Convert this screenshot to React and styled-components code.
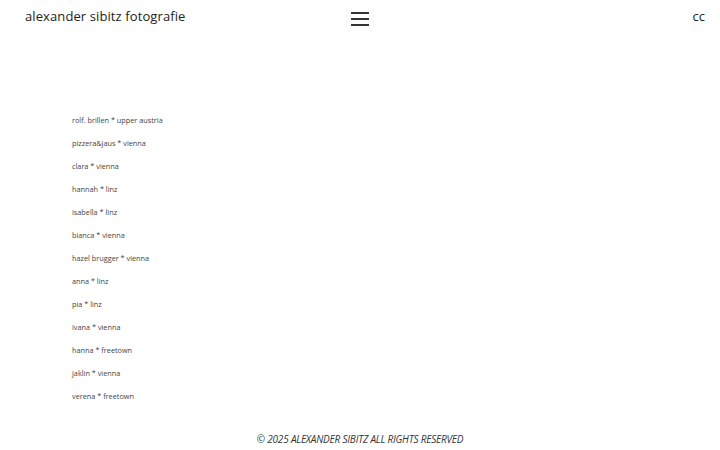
import React from "react";
import styled, { createGlobalStyle } from "styled-components";

const Global = createGlobalStyle`
  html, body { margin: 0; padding: 0; background: #fff; }
  body { font-family: "Open Sans", "DejaVu Sans", sans-serif; color: #222; }
`;

const Page = styled.div`
  width: 720px;
  height: 450px;
  display: flex;
  flex-direction: column;
  overflow: hidden;
`;

const Header = styled.header`
  height: 40px;
  display: grid;
  grid-template-columns: 1fr auto 1fr;
  align-items: start;
  padding: 0 15px;
`;

const Brand = styled.div`
  font-size: 13px;
  color: #222;
  padding: 7px 0 0 10px;
  letter-spacing: 0.1px;
`;

const Burger = styled.button`
  border: 0;
  background: none;
  padding: 0;
  margin-top: 12px;
  width: 18px;
  display: flex;
  flex-direction: column;
  gap: 4px;
  cursor: pointer;
`;

const Line = styled.span`
  display: block;
  height: 2px;
  background: #333;
`;

const Lang = styled.div`
  justify-self: end;
  font-size: 13px;
  padding-top: 7px;
  color: #222;
`;

const List = styled.ul`
  list-style: none;
  margin: 0;
  padding: 73px 0 0 72px;
  display: flex;
  flex-direction: column;
  gap: 9px;
  flex: 1;
`;

const Item = styled.li`
  font-size: 7.3px;
  line-height: 14px;
  color: #444;
`;

const Footer = styled.footer`
  text-align: center;
  font-size: 10px;
  font-style: italic;
  text-transform: uppercase;
  letter-spacing: -0.2px;
  color: #333;
  padding-bottom: 4px;
`;

const items = [
  "rolf. brillen * upper austria",
  "pizzera&jaus * vienna",
  "clara * vienna",
  "hannah * linz",
  "isabella * linz",
  "bianca * vienna",
  "hazel brugger * vienna",
  "anna * linz",
  "pia * linz",
  "ivana * vienna",
  "hanna * freetown",
  "jaklin * vienna",
  "verena * freetown",
];

export default function App() {
  return (
    <Page>
      <Global />
      <Header>
        <Brand>alexander sibitz fotografie</Brand>
        <Burger aria-label="menu">
          <Line />
          <Line />
          <Line />
        </Burger>
        <Lang>cc</Lang>
      </Header>
      <List>
        {items.map((t) => (
          <Item key={t}>{t}</Item>
        ))}
      </List>
      <Footer>© 2025 Alexander Sibitz all rights reserved</Footer>
    </Page>
  );
}
